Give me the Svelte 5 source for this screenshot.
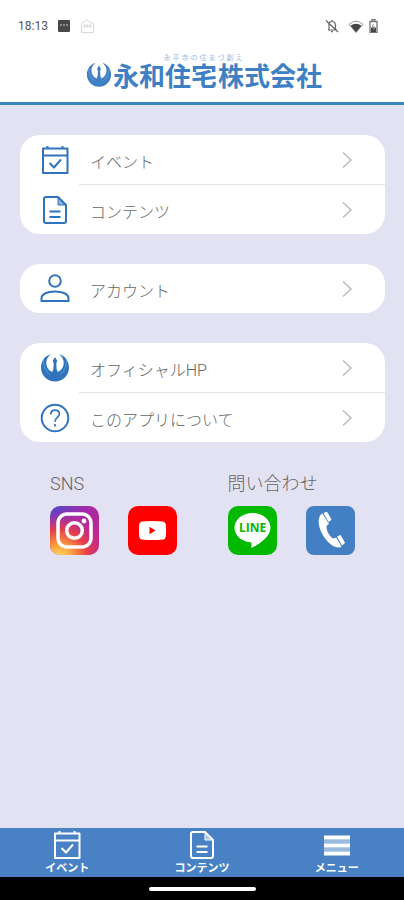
<script>
  const groups = [
    [
      { icon: 'calendar', label: 'イベント' },
      { icon: 'doc', label: 'コンテンツ' }
    ],
    [{ icon: 'person', label: 'アカウント' }],
    [
      { icon: 'crest', label: 'オフィシャルHP' },
      { icon: 'help', label: 'このアプリについて' }
    ]
  ];
  const tabs = [
    { icon: 'calendar', label: 'イベント' },
    { icon: 'doc', label: 'コンテンツ' },
    { icon: 'menu', label: 'メニュー' }
  ];
</script>

{#snippet glyph(name)}
  <svg class="glyph" viewBox="0 0 30 30" aria-hidden="true" fill="none" stroke="currentColor" stroke-width="2">
    {#if name === 'calendar'}
      <path d="M3 3.500h24.500V28H3zM3 10.500h24.500M7.500 1v3M22.500 1v3" stroke-linejoin="round" />
      <path d="M9.500 18l4.500 4.500 7-8" />
    {:else if name === 'doc'}
      <path d="M6 2h12l8 8v16q0 2-2 2H6q-2 0-2-2V4q0-2 2-2z" stroke-linejoin="round" />
      <path d="M18 2v8h8z" fill="currentColor" fill-opacity=".55" stroke-width="1" />
      <path d="M9.500 16.500h11M9.500 22h11" />
    {:else if name === 'person'}
      <circle cx="15" cy="7" r="5.800" />
      <path d="M1.500 27v-3c0-4 6-6.500 13.500-6.500S28.500 20 28.500 24v3z" />
    {:else if name === 'crest'}
      <path
        stroke="none"
        fill="currentColor"
        d="M11 1.200C5 2.500 1 8 1 14.500a14 14 0 0 0 28 0C29 8 25 2.500 19 1.200c3 2 4.700 5 4.700 8.300 0 4.500-2.200 8-6 9.500L16.600 16l-.3-5.500.9-2.700L15 4l-2.200 3.800.9 2.700-.3 5.500-1.100 3c-3.800-1.500-6-5-6-9.500 0-3.300 1.700-6.300 4.700-8.300z"
      />
      <path
        d="M3.500 6.500c-.5 6 2 12 6.500 15M26.500 6.500c.5 6-2 12-6.500 15"
        stroke="#fff"
        stroke-opacity=".4"
        stroke-width=".6"
      />
    {:else if name === 'help'}
      <circle cx="15" cy="15" r="13.300" />
      <path d="M10.800 11.500c0-6 8.600-5.500 8.600-.7 0 3.700-4.400 3.700-4.400 7.900M15 21v2.500" stroke-width="1.700" />
    {:else}
      <path d="M2 7.500h26M2 15.500h26M2 23.500h26" stroke-width="4" />
      <path d="M2 11.500h26M2 19.500h26" stroke-width="4" stroke-opacity=".45" />
    {/if}
  </svg>
{/snippet}

<div class="screen">
  <div class="status">
    <span class="time">18:13</span>
    <svg width="14" height="14" viewBox="0 0 14 14" aria-hidden="true">
      <rect x="1" y="1" width="12" height="12" rx="1" fill="#484848" />
      <path d="M3 6h8" stroke="#888" stroke-width="2" stroke-dasharray="2 1" />
    </svg>
    <svg width="15" height="16" viewBox="0 0 16 16" aria-hidden="true" fill="none" stroke="#d4d4d4">
      <path d="M1.500 15V5L5 3.500C6 1 9 1 10 3.500L14.500 5v10z" />
      <path d="M4 8h8" stroke-width="3" stroke-dasharray="2 1" />
    </svg>
    <span class="space"></span>
    <svg width="14" height="14" viewBox="0 0 14 14" aria-hidden="true" fill="none" stroke="#666" stroke-width="1.200">
      <path d="M3 11h9M4 10.500V6q0-3.500 3-3.500T10.500 6v4.500M7 1v1.500M6 12.700h2M1 1.500l12 11.500" />
    </svg>
    <svg class="wifi" width="16" height="13" viewBox="0 0 16 13" aria-hidden="true">
      <path d="M1 4.500Q8-2 15 4.500L8 12.500z" fill="#fff" stroke="#999" />
      <path d="M2.500 5.500Q8 2 13.500 5.500L8 12.500z" fill="#444" />
    </svg>
    <svg width="9" height="14" viewBox="0 0 9 14" aria-hidden="true">
      <path d="M3 2V.7h3V2M1 2.500h7v11H1z" fill="none" stroke="#777" stroke-width="1.300" />
      <path d="M2 8.500h5v4.500H2z" fill="#444" />
      <path d="M4.500 5l-1.500 3h3l-1.500 3" fill="none" stroke="#999" />
    </svg>
  </div>

  <header>
    <p class="tagline">永平寺の住まづ創え</p>
    <h1><span class="crest">{@render glyph('crest')}</span><span>永和住宅</span><span>株式会社</span></h1>
  </header>

  <main>
    {#each groups as group}
      <nav class="card">
        {#each group as item}
          <a class="row" href="#top">
            {@render glyph(item.icon)}
            <span class="label">{item.label}</span>
            <svg class="chevron" width="12" height="18" viewBox="0 0 12 18" aria-hidden="true">
              <path d="M2 1.500L10 9l-8 7.500" fill="none" stroke="#bbb" stroke-width="1.500" />
            </svg>
          </a>
        {/each}
      </nav>
    {/each}

    <div class="links">
      <section>
        <h2>SNS</h2>
        <div class="apps">
          <a href="#instagram" aria-label="Instagram">
            <svg viewBox="0 0 49 49" aria-hidden="true">
              <defs>
                <linearGradient id="ig-base" x1="0" y1="0" x2="1" y2="1">
                  <stop offset="0" stop-color="#4b49cf" />
                  <stop offset=".4" stop-color="#a529a8" />
                  <stop offset="1" stop-color="#c72b86" />
                </linearGradient>
                <radialGradient id="ig-glow" cx=".2" cy="1.050" r=".95">
                  <stop offset="0" stop-color="#ffdc60" />
                  <stop offset=".25" stop-color="#fda83f" />
                  <stop offset=".6" stop-color="#ee413d" stop-opacity=".9" />
                  <stop offset="1" stop-color="#c72b86" stop-opacity="0" />
                </radialGradient>
              </defs>
              <rect width="49" height="49" rx="10" fill="url(#ig-base)" />
              <rect width="49" height="49" rx="10" fill="url(#ig-glow)" />
              <g fill="none" stroke="#fff" stroke-width="3.500">
                <rect x="8" y="8" width="33" height="33" rx="9" />
                <circle cx="24.500" cy="24.500" r="7.800" />
              </g>
              <circle cx="34" cy="15" r="2.400" fill="#fff" />
            </svg>
          </a>
          <a href="#youtube" aria-label="YouTube">
            <svg viewBox="0 0 49 49" aria-hidden="true">
              <rect width="49" height="49" rx="10" fill="#fe0000" />
              <path d="M14 15.500q10.500-1 21 0 2.500.3 2.800 3 .5 6 0 12-.3 2.700-2.800 3-10.500 1-21 0-2.500-.3-2.800-3-.5-6 0-12 .3-2.700 2.800-3z" fill="#fff" />
              <path d="M21.500 20.800v7.400l6-3.700z" fill="#fe0000" />
            </svg>
          </a>
        </div>
      </section>
      <section>
        <h2>問い合わせ</h2>
        <div class="apps">
          <a href="#line" aria-label="LINE">
            <svg viewBox="0 0 49 49" aria-hidden="true">
              <rect width="49" height="49" rx="10" fill="#00b900" />
              <path d="M24.500 7c-10 0-18 6.500-18 14.700 0 7.500 6.500 13.300 15.500 14.600 1.500.3 1.800 1 1.500 2.500l-.3 2c-.1.800.3 1.200 1.300.7C31 38 42.500 31 42.500 21.700 42.500 13.500 34.500 7 24.500 7z" fill="#fff" />
              <text x="24.500" y="26" text-anchor="middle" class="line-word">LINE</text>
            </svg>
          </a>
          <a href="#phone" aria-label="電話">
            <svg viewBox="0 0 49 49" aria-hidden="true">
              <rect width="49" height="49" rx="8" fill="#437fc3" />
              <path d="M16.500 7.500C11.500 9.500 11.500 19 16 27.500S28 42.500 34 41.500l1.500-1-5.200-9-3.300 1c-3.500-2-7-8.500-6.500-12.500l2.500-2.500z" fill="#fff" />
              <path d="M17.300 7.200l2.700-1.200q1-.3 1.600.6l3.600 6.400q.4 1-.5 1.600l-2.500 1.700z" fill="#fff" />
              <path d="M31 30.800l2.400-1.500q1-.5 1.600.4l3.700 6.400q.4 1-.4 1.600l-2.600 2z" fill="#fff" />
              <path d="M17 7l5.500 9.700M30.600 31l5.300 9.300" stroke="#437fc3" stroke-width=".8" />
            </svg>
          </a>
        </div>
      </section>
    </div>
  </main>

  <nav class="tabs">
    {#each tabs as tab}
      <a href="#top">{@render glyph(tab.icon)}<span>{tab.label}</span></a>
    {/each}
  </nav>
  <div class="home"><span></span></div>
</div>

<style>
  :global(body) {
    margin: 0;
  }
  .screen {
    min-height: 100vh;
    display: flex;
    flex-direction: column;
    background: #e2e2f2;
    color: #666;
    font-family: Roboto, 'Noto Sans CJK JP', sans-serif;
  }
  a {
    color: inherit;
    text-decoration: none;
  }
  svg {
    display: block;
    flex: none;
  }
  .glyph {
    width: 30px;
    height: 30px;
  }
  .status {
    display: flex;
    align-items: center;
    gap: 9px;
    height: 52px;
    padding: 0 26px 0 18px;
    background: #fff;
  }
  .time {
    font-size: 12px;
    color: #555;
  }
  .space {
    flex: 1;
  }
  .wifi {
    margin-right: -4px;
  }
  header {
    display: flex;
    flex-direction: column;
    align-items: center;
    height: 50px;
    padding-left: 4px;
    background: #fff;
    border-bottom: 3px solid #3c86c4;
    color: #3f7fc4;
  }
  .tagline {
    margin: 0;
    font: 7px/10px 'Noto Sans CJK JP', sans-serif;
    letter-spacing: 2px;
    color: #9dbbdd;
  }
  h1 {
    display: flex;
    align-items: center;
    gap: 1px;
    margin: 0;
    font: 700 26px/26px 'Noto Sans CJK JP', sans-serif;
  }
  .crest .glyph {
    width: 26px;
    height: 26px;
  }
  main {
    flex: 1;
    display: flex;
    flex-direction: column;
    gap: 30px;
    padding: 30px 19px 30px 20px;
  }
  .card {
    border-radius: 20px;
    overflow: hidden;
    background: #fff;
  }
  .row {
    display: flex;
    align-items: center;
    height: 49px;
    padding: 0 32px 0 20px;
  }
  .row .glyph {
    color: #2f74bd;
  }
  .row + .row {
    border-top: 1px solid #e4e4e8;
    border-image: linear-gradient(to right, transparent 60px, #e4e4e8 60px) 1;
  }
  .label {
    flex: 1;
    padding: 6px 0 0 20px;
    font-size: 16px;
    line-height: 24px;
    font-weight: 300;
  }
  .links {
    display: grid;
    grid-template-columns: 177fr 127fr;
    padding: 0 30px;
  }
  h2 {
    margin: 0 0 10px;
    font-size: 18px;
    line-height: 24px;
    font-weight: 300;
  }
  .apps {
    display: flex;
    gap: 29px;
  }
  .apps svg {
    width: 49px;
    height: 49px;
  }
  .line-word {
    font: 700 12px 'Open Sans', sans-serif;
    fill: #00b900;
  }
  .tabs {
    display: grid;
    grid-template-columns: repeat(3, 1fr);
    height: 49px;
    background: #4882c5;
    color: #fff;
  }
  .tabs a {
    display: flex;
    flex-direction: column;
    align-items: center;
    padding-top: 2px;
    font-size: 11px;
    line-height: 18px;
    font-weight: 700;
  }
  .home {
    display: flex;
    align-items: center;
    justify-content: center;
    height: 23px;
    background: #000;
  }
  .home span {
    width: 107px;
    height: 4px;
    border-radius: 2px;
    background: #fff;
  }
</style>
